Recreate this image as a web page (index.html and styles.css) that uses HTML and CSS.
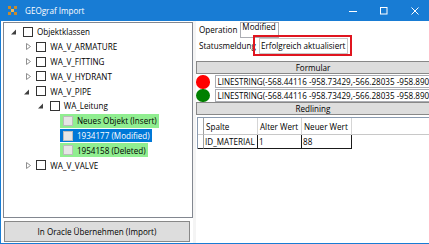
FILE: index.html
```html
<!DOCTYPE html>
<html lang="de">
<head>
    <meta charset="UTF-8">
    <title>GEOgraf Import</title>
    <link rel="stylesheet" href="styles.css">
</head>
<body>
<div class="window">
    <div class="titlebar">
        <svg class="app-icon" width="9" height="9" viewBox="0 0 9 9">
            <rect x="0" y="0" width="3" height="3" fill="#c98a2c"/>
            <rect x="6" y="0" width="3" height="3" fill="#c98a2c"/>
            <rect x="3" y="3" width="3" height="3" fill="#efba55"/>
            <rect x="0" y="6" width="3" height="3" fill="#c98a2c"/>
            <rect x="6" y="6" width="3" height="3" fill="#c98a2c"/>
        </svg>
        <span class="title">GEOgraf Import</span>
        <div class="controls">
            <span class="ctl"><svg width="8" height="8" viewBox="0 0 8 8"><path d="M0 4.5h8" stroke="#fff"/></svg></span>
            <span class="ctl"><svg width="8" height="8" viewBox="0 0 8 8"><rect x="0.5" y="0.5" width="6.5" height="6.5" fill="none" stroke="#fff"/></svg></span>
            <span class="ctl"><svg width="8" height="8" viewBox="0 0 8 8"><path d="M0.5 0.5l7 7M7.5 0.5l-7 7" stroke="#fff"/></svg></span>
        </div>
    </div>

    <div class="content">
        <div class="left">
            <div class="tree">
                <ul>
                    <li>
                        <div class="row"><span class="exp open"></span><span class="cb"></span><span class="label">Objektklassen</span></div>
                        <ul>
                            <li><div class="row"><span class="exp"></span><span class="cb"></span><span class="label">WA_V_ARMATURE</span></div></li>
                            <li><div class="row"><span class="exp"></span><span class="cb"></span><span class="label">WA_V_FITTING</span></div></li>
                            <li><div class="row"><span class="exp"></span><span class="cb"></span><span class="label">WA_V_HYDRANT</span></div></li>
                            <li>
                                <div class="row"><span class="exp open"></span><span class="cb"></span><span class="label">WA_V_PIPE</span></div>
                                <ul>
                                    <li>
                                        <div class="row"><span class="exp open"></span><span class="cb"></span><span class="label">WA_Leitung</span></div>
                                        <ul>
                                            <li><div class="row leaf"><span class="hl insert"><span class="cb off"></span><span class="label">Neues Objekt (Insert)</span></span></div></li>
                                            <li><div class="row leaf"><span class="hl selected"><span class="cb off"></span><span class="label">1934177 (Modified)</span></span></div></li>
                                            <li><div class="row leaf"><span class="hl deleted"><span class="cb off"></span><span class="label">1954158 (Deleted)</span></span></div></li>
                                        </ul>
                                    </li>
                                </ul>
                            </li>
                            <li><div class="row"><span class="exp"></span><span class="cb"></span><span class="label">WA_V_VALVE</span></div></li>
                        </ul>
                    </li>
                </ul>
            </div>
            <button class="import-btn">In Oracle Übernehmen (Import)</button>
        </div>

        <div class="splitter"></div>

        <div class="right">
            <div class="field-row op-row">
                <span class="lbl">Operation</span>
                <span class="op-box">Modified</span>
            </div>
            <div class="field-row status-row">
                <span class="lbl">Statusmeldung</span>
                <span class="status-box">Erfolgreich aktualisiert<span class="mark"></span></span>
            </div>

            <div class="bar">Formular</div>
            <div class="geom-list">
                <div class="geom-row"><span class="dot red"></span><span class="geom">LINESTRING(-568.44116 -958.73429,-566.28035 -958.89035,-564.11953 -959.04642)</span></div>
                <div class="geom-row"><span class="dot green"></span><span class="geom">LINESTRING(-568.44116 -958.73429,-566.28035 -958.89035,-564.11953 -959.04642)</span></div>
            </div>

            <div class="bar">Redlining</div>
            <table class="grid">
                <thead>
                    <tr><th class="rh"></th><th class="c1">Spalte</th><th class="c2">Alter Wert</th><th class="c3">Neuer Wert</th><th class="fill"></th></tr>
                </thead>
                <tbody>
                    <tr><td class="rh"></td><td>ID_MATERIAL</td><td>1</td><td>88</td><td class="fill"></td></tr>
                </tbody>
            </table>
        </div>
    </div>
</div>
</body>
</html>
```

FILE: styles.css
```css
body {
    margin: 0;
    width: 429px;
    height: 244px;
    overflow: hidden;
    background: #fff;
    font-family: "Open Sans", sans-serif;
    font-size: 8.1px;
    color: #000;
}

.window {
    width: 430px;
    height: 244px;
    box-sizing: border-box;
    border-left: 1px solid #187cd4;
    border-bottom: 1px solid #187cd4;
}

/* title bar */
.titlebar {
    height: 21px;
    background: #187cd4;
    display: flex;
    align-items: center;
    color: #fff;
}

.app-icon {
    margin-left: 7px;
    margin-right: 8px;
}

.title {
    font-size: 8.1px;
}

.controls {
    margin-left: auto;
    display: flex;
    height: 100%;
}

.ctl {
    width: 31px;
    display: flex;
    align-items: center;
    justify-content: center;
}

/* main area */
.content {
    display: flex;
    height: 222px;
}

.left {
    width: 192px;
    flex: none;
}

.tree {
    margin: 1px 0 0 2px;
    width: 190px;
    height: 196px;
    box-sizing: border-box;
    border: 1px solid #828790;
    background: #fff;
    padding-top: 1.6px;
    overflow: hidden;
}

.tree ul {
    list-style: none;
    margin: 0;
    padding-left: 13.33px;
}

.tree > ul {
    padding-left: 6px;
}

.row {
    display: flex;
    align-items: center;
    height: 14.8px;
    white-space: nowrap;
}

.exp {
    width: 13px;
    height: 13px;
    flex: none;
    background: url("data:image/svg+xml,%3Csvg xmlns='http://www.w3.org/2000/svg' width='13' height='13'%3E%3Cpath d='M3.5 3.5L7.5 6.5L3.5 9.5Z' fill='none' stroke='%23909090'/%3E%3C/svg%3E") no-repeat;
}

.exp.open {
    background: url("data:image/svg+xml,%3Csvg xmlns='http://www.w3.org/2000/svg' width='13' height='13'%3E%3Cpath d='M6 4.5L6 9.5L1 9.5Z' fill='%23404040'/%3E%3C/svg%3E") no-repeat;
}

.row.leaf {
    padding-left: 10px;
}

.cb {
    width: 10px;
    height: 10px;
    flex: none;
    box-sizing: border-box;
    border: 1px solid #333;
    background: #fff;
}

.cb.off {
    border-color: #bcbcbc;
    background: #e6e6e6;
}

.label {
    margin-left: 4px;
}

.hl {
    display: flex;
    align-items: center;
    height: 13.8px;
    padding: 0 2px 0 3px;
}

.hl.insert,
.hl.deleted {
    background: #90ee90;
}

.hl.selected {
    background: #0078d7;
    color: #fff;
}

.import-btn {
    display: block;
    margin: 3px 0 0 3px;
    width: 186px;
    height: 21px;
    padding: 0;
    border: 1px solid #888;
    background: #dddddd;
    font-family: inherit;
    font-size: 8.1px;
    color: #000;
}

.splitter {
    width: 3px;
    flex: none;
    background: #f4f4f4;
}

/* right panel */
.right {
    width: 234px;
    flex: none;
    padding-top: 1px;
}

.field-row {
    display: flex;
    align-items: flex-start;
    gap: 3px;
    padding-left: 3px;
    white-space: nowrap;
    line-height: 11px;
}

.op-row {
    height: 17px;
}

.op-row .lbl {
    margin-top: 2.3px;
}

.op-box {
    height: 16px;
    box-sizing: border-box;
    border: 1px solid #abadb3;
    padding: 0 2px 0 1px;
    line-height: 8px;
}

.status-row {
    height: 22px;
}

.status-row .lbl {
    margin-top: 1.3px;
}

.status-box {
    position: relative;
    margin-top: -1px;
    width: 89px;
    height: 16px;
    box-sizing: border-box;
    border: 1px solid #c8c8c8;
    padding-left: 1px;
    line-height: 14px;
}

.mark {
    position: absolute;
    left: -7px;
    top: -4px;
    right: -5px;
    bottom: -3px;
    border: 2px solid #e0151f;
}

.bar {
    height: 13px;
    box-sizing: border-box;
    border: 1px solid #888;
    background: #dddddd;
    text-align: center;
    line-height: 11px;
}

.geom-list {
    margin-top: 1px;
}

.geom-row {
    display: flex;
    align-items: center;
    height: 13.5px;
}

.dot {
    width: 13.5px;
    height: 13.5px;
    flex: none;
    border-radius: 50%;
}

.dot.red {
    background: #f00;
}

.dot.green {
    background: #008000;
}

.geom {
    flex: 1;
    margin-left: 5px;
    height: 13px;
    box-sizing: border-box;
    border: 1px solid #abadb3;
    padding-left: 2px;
    line-height: 11px;
    white-space: nowrap;
    overflow: hidden;
}

.grid {
    margin: 2px 0 0 1px;
    width: 233px;
    table-layout: fixed;
    border-collapse: separate;
    border-spacing: 0;
    border-top: 1px solid #8a9bb0;
    border-left: 1px solid #8a9bb0;
    font-size: 8.1px;
}

.grid th,
.grid td {
    box-sizing: border-box;
    padding: 0;
    text-align: left;
    font-weight: normal;
    white-space: nowrap;
    overflow: hidden;
}

.grid th {
    height: 17px;
    padding-left: 2px;
    border-right: 1px solid #d5d5d5;
    border-bottom: 1px solid #c8c8c8;
}

.grid td {
    height: 14px;
    padding-left: 1px;
    border-right: 1px solid #1a1a1a;
    border-bottom: 1px solid #1a1a1a;
}

.grid .rh {
    width: 6px;
    padding: 0;
    border-right-color: #a0a0a0;
}

.grid .c1 { width: 54px; }
.grid .c2 { width: 44px; }
.grid .c3 { width: 50px; }

.grid th.fill {
    border-right: none;
}

.grid td.fill {
    border-right: none;
    border-bottom: none;
}
```
